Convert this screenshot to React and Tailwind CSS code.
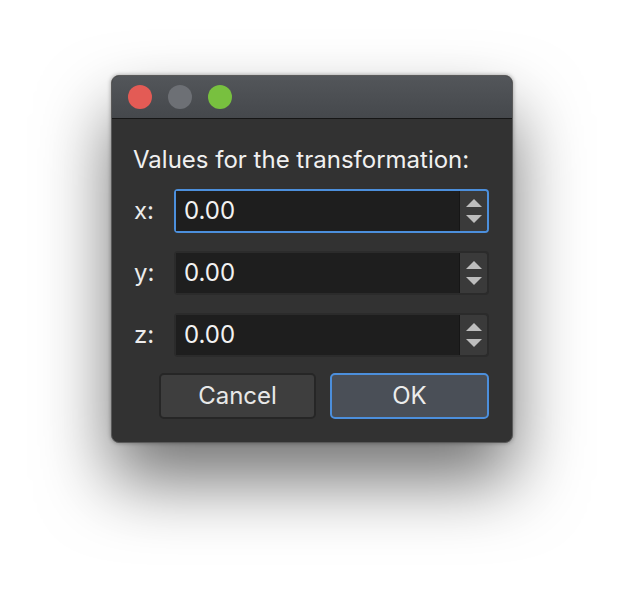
const rows = [
  { label: "x:", value: "0.00", focused: true },
  { label: "y:", value: "0.00", focused: false },
  { label: "z:", value: "0.00", focused: false },
];

const font = { fontFamily: 'Inter, "Liberation Sans", Arial, sans-serif' };

function Spinner() {
  return (
    <div className="flex w-[28px] flex-col items-center justify-center gap-[8px] self-stretch rounded-r-[3px] border-l border-[#161616] bg-[#3a3a3a]">
      <svg width="16" height="8" viewBox="0 0 16 8">
        <path d="M8 0 L16 8 L0 8 Z" fill="#bdbdbd" />
      </svg>
      <svg width="16" height="8" viewBox="0 0 16 8">
        <path d="M0 0 L16 0 L8 8 Z" fill="#bdbdbd" />
      </svg>
    </div>
  );
}

function Field({ label, value, focused }) {
  return (
    <div className="flex h-[44px] items-center">
      <span className="w-[42px] pl-[22px] text-[24px] text-[#ececec]">{label}</span>
      <div
        className={`ml-[20px] flex h-full w-[315px] items-stretch rounded-[4px] ${
          focused ? "border-2 border-[#4c8fdc]" : "border-2 border-[#2b2b2b]"
        }`}
      >
        <div className="flex flex-1 items-center bg-[#1e1e1e] pl-[8px] text-[24px] text-[#f2f2f2]">
          {value}
        </div>
        <Spinner />
      </div>
    </div>
  );
}

export default function App() {
  return (
    <div className="h-[590px] w-[624px] bg-white pl-[111px] pt-[75px]" style={font}>
      <div className="flex h-[368px] w-[402px] flex-col overflow-hidden rounded-[8px] border border-[#5a5a5a] bg-[#323232] shadow-[0_0_4px_rgba(0,0,0,0.35),0_38px_70px_rgba(0,0,0,0.55)]">
        <div className="flex h-[43px] items-center gap-[16px] border-b border-[#161616] bg-gradient-to-b from-[#53565a] to-[#45484c] pl-[16px]">
          <span className="h-[24px] w-[24px] rounded-full bg-[#e35b55]" />
          <span className="h-[24px] w-[24px] rounded-full bg-[#6d7075]" />
          <span className="h-[24px] w-[24px] rounded-full bg-[#78c03f]" />
        </div>
        <div className="flex flex-col pt-[27px]">
          <div className="pl-[21px] text-[24px] leading-[28px] text-[#f0f0f0]">
            Values for the transformation:
          </div>
          <div className="mt-[15px] flex flex-col gap-[18px]">
            {rows.map((r) => (
              <Field key={r.label} {...r} />
            ))}
          </div>
          <div className="mt-[16px] flex gap-[14px] pl-[47px]">
            <button className="h-[46px] w-[157px] rounded-[5px] border-2 border-[#262626] bg-[#3e3e3e] text-[24px] text-[#e8e8e8]">
              Cancel
            </button>
            <button className="h-[46px] w-[159px] rounded-[5px] border-2 border-[#4c8fdc] bg-[#4a4f57] text-[24px] text-[#ececec]">
              OK
            </button>
          </div>
        </div>
      </div>
    </div>
  );
}
